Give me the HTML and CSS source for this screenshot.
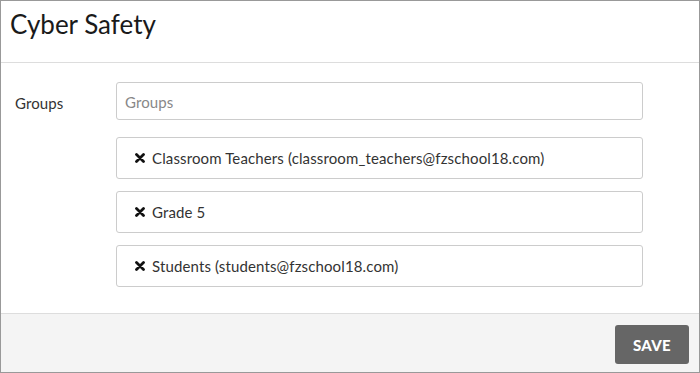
FILE: index.html
```html
<!DOCTYPE html>
<html>
<head>
<meta charset="utf-8">
<link rel="stylesheet" href="styles.css">
</head>
<body>
<div class="page">
  <header class="header">
    <h1 class="title">Cyber Safety</h1>
  </header>
  <main class="content">
    <div class="form-row">
      <label class="label">Groups</label>
      <div class="field-col">
        <div class="input">Groups</div>
        <div class="chip"><svg class="x" viewBox="0 0 10 10" width="10" height="10"><path d="M1.5 1.5 L8.5 8.5 M8.5 1.5 L1.5 8.5" stroke="#111" stroke-width="2.8" stroke-linecap="round"/></svg><span>Classroom Teachers (classroom_teachers@fzschool18.com)</span></div>
        <div class="chip"><svg class="x" viewBox="0 0 10 10" width="10" height="10"><path d="M1.5 1.5 L8.5 8.5 M8.5 1.5 L1.5 8.5" stroke="#111" stroke-width="2.8" stroke-linecap="round"/></svg><span>Grade 5</span></div>
        <div class="chip"><svg class="x" viewBox="0 0 10 10" width="10" height="10"><path d="M1.5 1.5 L8.5 8.5 M8.5 1.5 L1.5 8.5" stroke="#111" stroke-width="2.8" stroke-linecap="round"/></svg><span>Students (students@fzschool18.com)</span></div>
      </div>
    </div>
  </main>
  <footer class="footer">
    <button class="save">SAVE</button>
  </footer>
</div>
</body>
</html>
```
FILE: styles.css
```css
* { box-sizing: border-box; }
html, body { margin: 0; padding: 0; background: #fff; }
body { font-family: Lato, "Open Sans", sans-serif; color: #333; }
.page {
  width: 700px;
  height: 373px;
  border: 1px solid #999;
  display: flex;
  flex-direction: column;
}
.header {
  height: 62px;
  border-bottom: 1px solid #ddd;
  padding: 6px 0 0 9px;
}
.title {
  margin: 0;
  font-weight: 400;
  font-size: 26px;
  line-height: 34px;
  color: #1a1a1a;
}
.content {
  flex: 1;
  padding: 19px 0 0 14px;
}
.form-row { display: flex; }
.label {
  width: 101px;
  font-size: 15px;
  line-height: 38px;
  padding-top: 2px;
  letter-spacing: 0.1px;
  color: #333;
}
.field-col {
  width: 527px;
  display: flex;
  flex-direction: column;
}
.input {
  height: 38px;
  border: 1px solid #ccc;
  border-radius: 3px;
  padding: 2px 8px 0;
  font-size: 15px;
  line-height: 34px;
  letter-spacing: 0.1px;
  color: #888;
  margin-bottom: 17px;
}
.chip {
  height: 42px;
  border: 1px solid #ccc;
  border-radius: 3px;
  padding: 0 17px 0 18px;
  font-size: 15px;
  letter-spacing: 0.13px;
  color: #333;
  display: flex;
  align-items: center;
  gap: 7px;
  margin-bottom: 12px;
}
.chip:last-child { margin-bottom: 0; }
.x { flex: none; }
.footer {
  height: 59px;
  border-top: 1px solid #ddd;
  background: #f4f4f4;
  display: flex;
  justify-content: flex-end;
  align-items: flex-start;
  padding: 11px 10px 0 0;
}
.save {
  width: 74px;
  height: 39px;
  border: none;
  border-radius: 3px;
  background: #666;
  color: #fff;
  font-family: Lato, sans-serif;
  font-weight: 900;
  font-size: 15px;
  letter-spacing: 0.3px;
  padding: 0;
}
```
